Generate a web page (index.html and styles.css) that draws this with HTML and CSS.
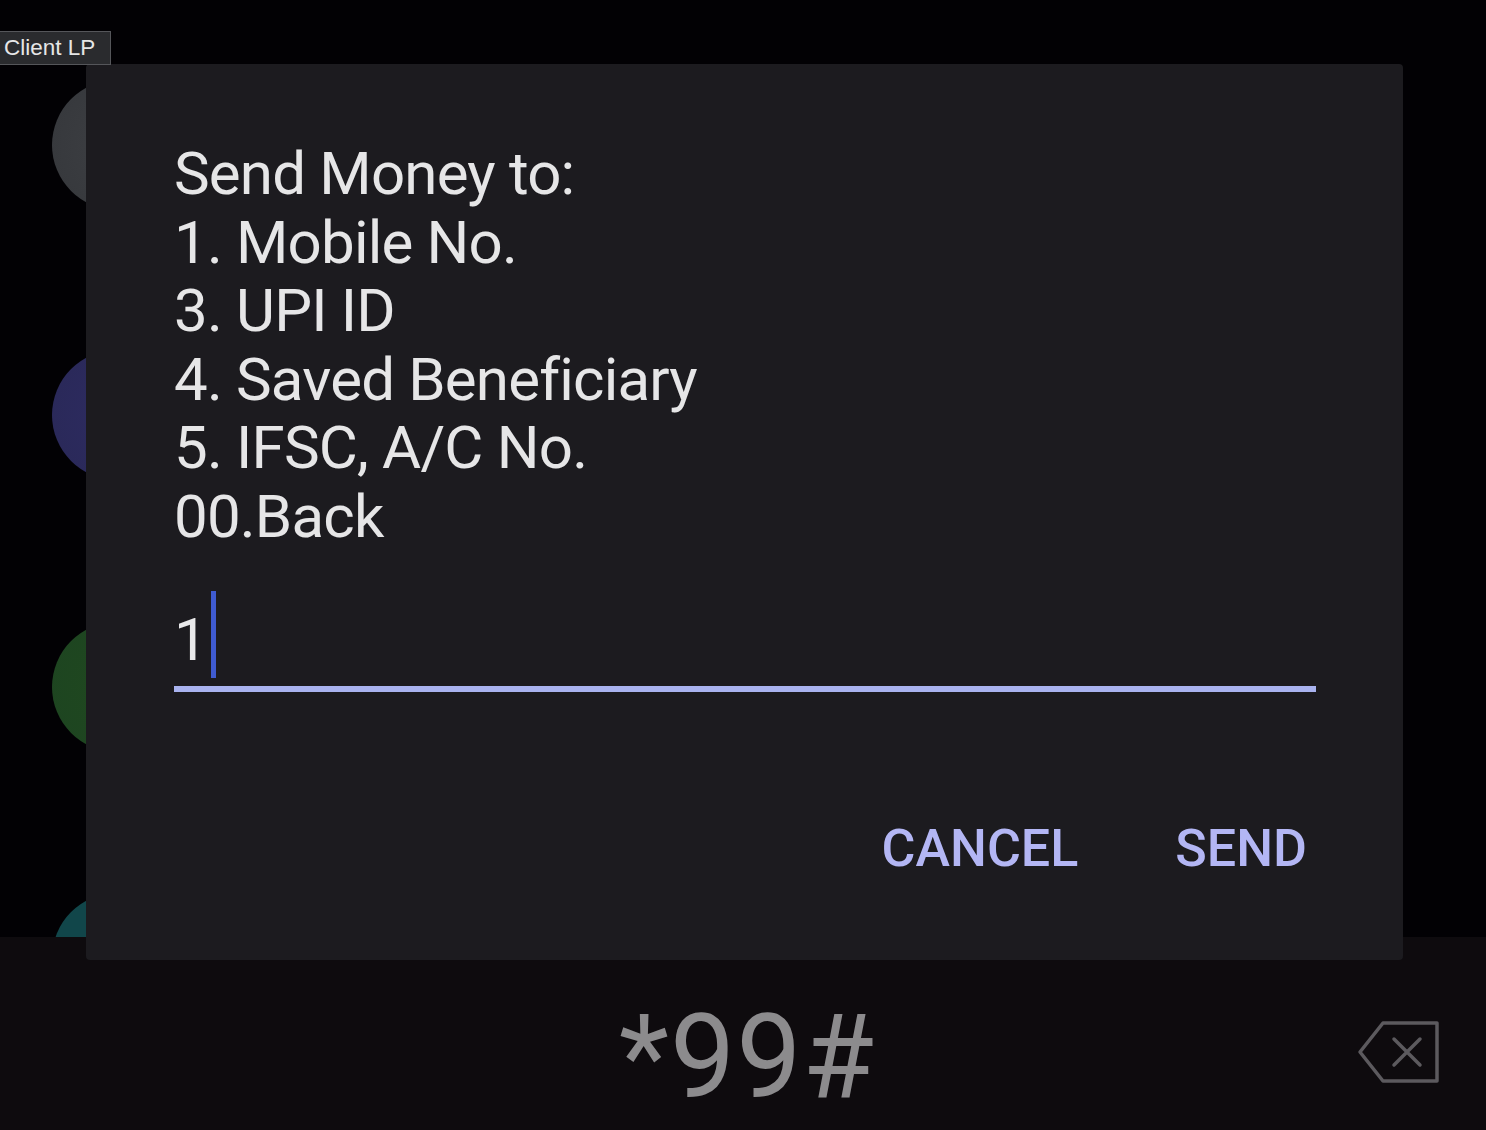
FILE: index.html
```html
<!DOCTYPE html>
<html>
<head>
<meta charset="utf-8">
<link rel="stylesheet" href="styles.css">
</head>
<body>
<div class="screen">
  <div class="label">Client LP</div>
  <div class="circles">
    <span class="dot dot-gray"></span>
    <span class="dot dot-blue"></span>
    <span class="dot dot-green"></span>
    <span class="dot dot-teal"></span>
  </div>
  <div class="dialog">
    <div class="message">
      <div>Send Money to:</div>
      <div>1. Mobile No.</div>
      <div>3. UPI ID</div>
      <div>4. Saved Beneficiary</div>
      <div>5. IFSC, A/C No.</div>
      <div>00.Back</div>
    </div>
    <div class="field">
      <span class="value">1</span><span class="caret"></span>
    </div>
    <div class="actions">
      <span class="btn">CANCEL</span>
      <span class="btn">SEND</span>
    </div>
  </div>
  <div class="dialer">
    <div class="code">*99#</div>
    <svg class="backspace" width="84" height="64" viewBox="0 0 84 64">
      <path d="M26 3 H80 V61 H26 L3 32 Z" fill="none" stroke="#5c5a5e" stroke-width="3.5" stroke-linejoin="round"/>
      <path d="M37 19 L63 45 M63 19 L37 45" stroke="#5c5a5e" stroke-width="3.5" stroke-linecap="round"/>
    </svg>
  </div>
</div>
</body>
</html>
```
FILE: styles.css
```css
html, body {
  margin: 0;
  padding: 0;
  background: #020104;
}
.screen {
  position: relative;
  width: 1486px;
  height: 1130px;
  overflow: hidden;
  background: #020104;
  font-family: Roboto, "Noto Sans", sans-serif;
}
.label {
  position: absolute;
  left: 0;
  top: 31px;
  width: 111px;
  height: 34px;
  box-sizing: border-box;
  background: #2a2b2e;
  border: 1px solid #55565a;
  border-left: none;
  color: #e6e6e6;
  font-family: "Liberation Sans", Arial, sans-serif;
  font-size: 22.5px;
  line-height: 32px;
  padding-left: 4px;
  z-index: 5;
}
.circles {
  position: absolute;
  left: 52px;
  top: 0;
  width: 140px;
  height: 1130px;
}
.dot {
  position: absolute;
  left: 0;
  width: 130px;
  height: 130px;
  border-radius: 50%;
}
.dot-gray { top: 80px; background: radial-gradient(circle at 60% 50%, #3e4044, #35373b); }
.dot-blue { top: 350px; background: radial-gradient(circle at 60% 50%, #2e2c62, #292857); }
.dot-green { top: 622px; background: radial-gradient(circle at 60% 50%, #20491f, #1d4421); }
.dot-teal { top: 893px; background: #11464a; }
.dialog {
  position: absolute;
  left: 86px;
  top: 64px;
  width: 1317px;
  height: 896px;
  box-sizing: border-box;
  background: #1c1b1f;
  border-radius: 4px;
  z-index: 3;
  padding: 76px 88px 0 88px;
  display: flex;
  flex-direction: column;
}
.message {
  color: #e6e6e7;
  font-size: 60px;
  line-height: 68.6px;
  letter-spacing: -0.8px;
}
.field {
  margin-top: 44px;
  height: 90px;
  border-bottom: 6px solid #a9b3ef;
  display: flex;
  align-items: flex-end;
  width: 1142px;
}
.value {
  color: #e9e9ea;
  font-size: 60px;
  line-height: 80px;
  margin-left: 0;
  margin-bottom: 6px;
}
.caret {
  display: inline-block;
  width: 5px;
  height: 87px;
  background: #3f5bd0;
  margin-left: 3px;
  margin-bottom: 8px;
}
.actions {
  margin-top: 130px;
  display: flex;
  justify-content: flex-end;
  gap: 97px;
  padding-right: 8px;
}
.btn {
  color: #b3b6f4;
  font-size: 52px;
  font-weight: 500;
  line-height: 54px;
}
.dialer {
  position: absolute;
  left: 0;
  top: 937px;
  width: 1486px;
  height: 193px;
  background: #0e0b0e;
  z-index: 1;
  display: flex;
  justify-content: center;
  align-items: flex-start;
}
.code {
  margin-top: 57px;
  color: #8c8b8d;
  font-size: 116px;
  line-height: 126px;
  letter-spacing: 1px;
  margin-left: 8px;
}
.backspace {
  position: absolute;
  left: 1357px;
  top: 83px;
}
```
